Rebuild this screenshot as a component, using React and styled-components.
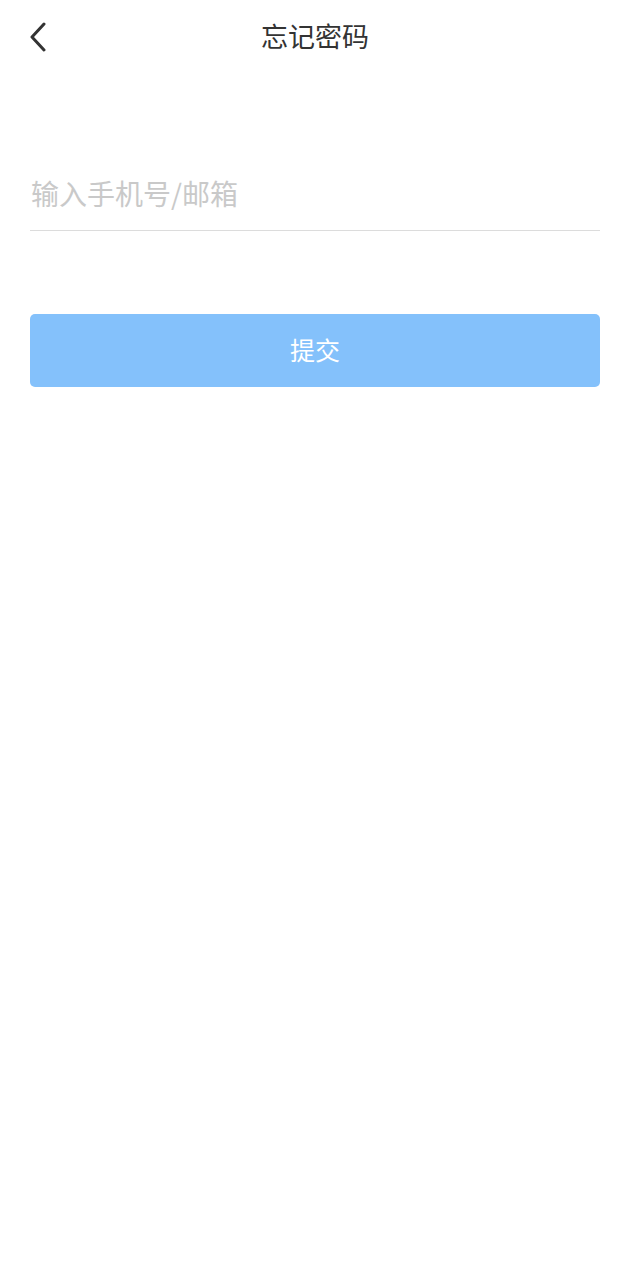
import React, { useState } from "react";
import styled, { createGlobalStyle } from "styled-components";

const GlobalStyle = createGlobalStyle`
  * {
    box-sizing: border-box;
  }

  body {
    margin: 0;
    background: #ffffff;
    font-family: "Noto Sans CJK SC", "Noto Sans", sans-serif;
  }
`;

const Page = styled.div`
  width: 630px;
  min-height: 1280px;
  background: #ffffff;
`;

const Header = styled.header`
  position: relative;
  height: 74px;
  padding-bottom: 4px;
  display: flex;
  align-items: center;
  justify-content: center;
`;

const BackButton = styled.button`
  position: absolute;
  left: 20px;
  top: 17px;
  width: 36px;
  height: 40px;
  padding: 0;
  border: none;
  background: transparent;
  display: flex;
  align-items: center;
  justify-content: center;
  cursor: pointer;
`;

const Title = styled.h1`
  margin: 0;
  font-size: 27px;
  font-weight: 400;
  color: #333333;
  line-height: 1;
`;

const Form = styled.form`
  padding: 97px 30px 0;
  display: flex;
  flex-direction: column;
`;

const Field = styled.input`
  width: 100%;
  height: 60px;
  padding: 0 0 16px 1px;
  border: none;
  border-bottom: 1px solid #dcdcdc;
  outline: none;
  background: transparent;
  font-family: inherit;
  font-size: 28px;
  color: #333333;

  &::placeholder {
    color: #c9c9c9;
  }
`;

const SubmitButton = styled.button`
  margin-top: 83px;
  height: 73px;
  width: 100%;
  padding: 0 0 4px;
  border: none;
  border-radius: 5px;
  background: ${({ $active }) => ($active ? "#2f93f6" : "#84c1fb")};
  color: #ffffff;
  font-family: inherit;
  font-size: 25px;
  cursor: pointer;
`;

const ChevronLeft = () => (
  <svg width="20" height="30" viewBox="0 0 20 30" fill="none">
    <path
      d="M16 2 L4 15 L16 28"
      stroke="#333333"
      strokeWidth="3"
      strokeLinecap="round"
      strokeLinejoin="round"
    />
  </svg>
);

export default function App() {
  const [account, setAccount] = useState("");

  return (
    <Page>
      <GlobalStyle />
      <Header>
        <BackButton aria-label="返回">
          <ChevronLeft />
        </BackButton>
        <Title>忘记密码</Title>
      </Header>
      <Form onSubmit={(e) => e.preventDefault()}>
        <Field
          placeholder="输入手机号/邮箱"
          value={account}
          onChange={(e) => setAccount(e.target.value)}
        />
        <SubmitButton type="submit" $active={account.length > 0}>
          提交
        </SubmitButton>
      </Form>
    </Page>
  );
}
